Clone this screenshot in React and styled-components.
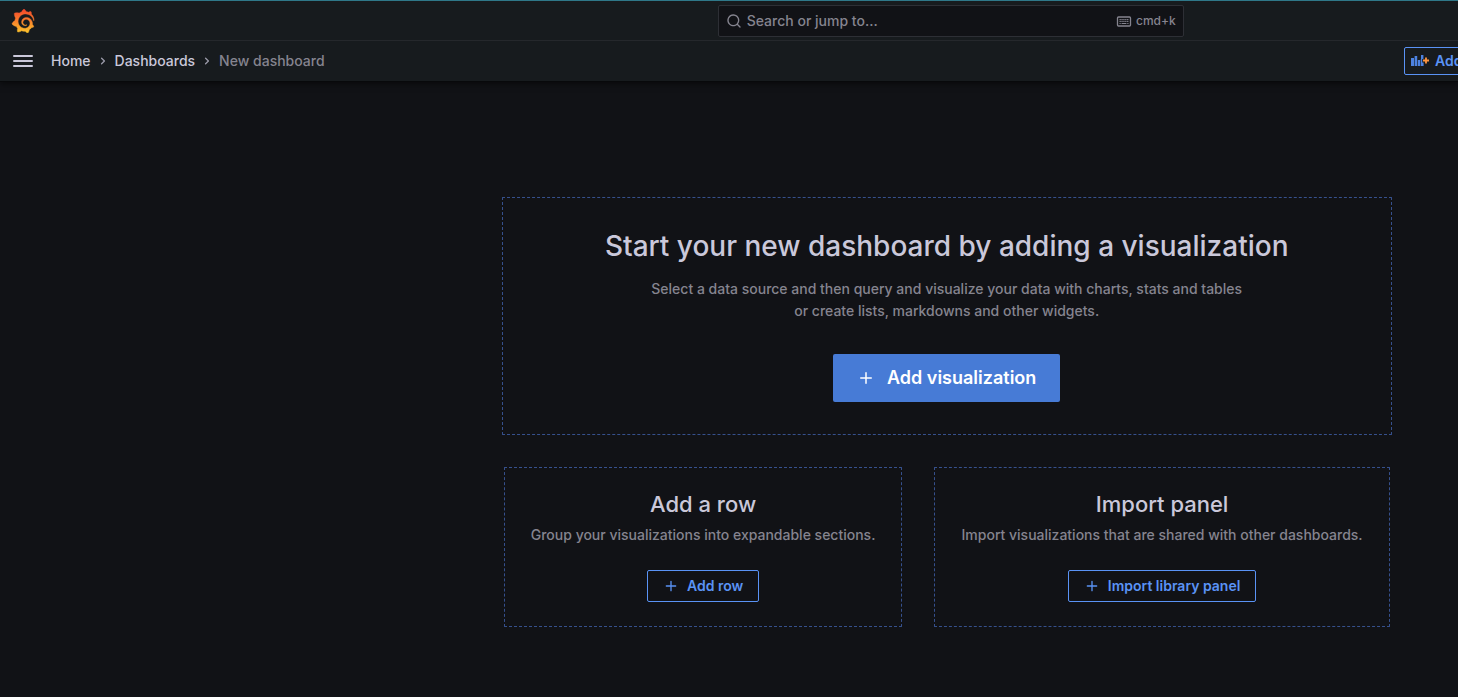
import React from "react";
import styled, { createGlobalStyle, css } from "styled-components";
import { SiGrafana } from "react-icons/si";

const GlobalStyle = createGlobalStyle`
  *, *::before, *::after { box-sizing: border-box; }
  body {
    margin: 0;
    background: #111216;
    color: #cac8da;
    font-family: Inter, "Liberation Sans", sans-serif;
    font-size: 14px;
    line-height: 22px;
    -webkit-font-smoothing: antialiased;
  }
  button, input { font: inherit; color: inherit; }
  h1, h2, p, ol { margin: 0; padding: 0; }
`;

const Page = styled.div`
  min-height: 100vh;
  overflow: hidden;
  display: flex;
  flex-direction: column;
`;

const Header = styled.header`
  background: #171b1e;
  border-top: 1px solid #2f7889;
  border-bottom: 1px solid #08090b;
  box-shadow: 0 2px 6px rgba(0, 0, 0, 0.5);
`;

const wideCanvas = css`
  width: calc(130% - 2px);
`;

const TopBar = styled.div`
  ${wideCanvas}
  display: flex;
  align-items: center;
  height: 40px;
  padding-left: 8px;
  border-bottom: 1px solid #25282c;
`;

const TopBarSide = styled.div`
  flex: 1;
  display: flex;
  padding-left: 3px;
`;

const HomeLink = styled.a`
  display: flex;
  color: #f9622f;
`;

const SearchBox = styled.label`
  display: flex;
  align-items: center;
  gap: 5px;
  flex: 0 1 466px;
  height: 32px;
  padding: 0 7px;
  background: #111216;
  border: 1px solid #2d2f35;
  border-radius: 2px;
  color: #85848f;
`;

const SearchInput = styled.input`
  flex: 1;
  min-width: 0;
  padding: 0;
  border: 0;
  outline: 0;
  background: none;
  font-weight: 500;
  &::placeholder { color: #85848f; opacity: 1; }
`;

const Shortcut = styled.span`
  display: flex;
  align-items: center;
  gap: 4px;
  font-size: 12px;
  font-weight: 500;
  line-height: 20px;
`;

const ToolBar = styled.div`
  display: flex;
  align-items: center;
  height: 40px;
  padding-left: 11px;
`;

const IconButton = styled.button`
  display: flex;
  padding: 0;
  border: 0;
  background: none;
`;

const Breadcrumbs = styled.nav`
  flex: 1;
  padding-left: 16px;
`;

const CrumbList = styled.ol`
  display: flex;
  align-items: center;
  list-style: none;
`;

const Crumb = styled.li`
  display: flex;
  align-items: center;
  font-weight: 500;
  color: ${(p) => (p.$current ? "#85848f" : "#cac8da")};
  a { color: inherit; text-decoration: none; }
  svg { margin: 0 4px; color: #9a9aa8; }
`;

const Actions = styled.div`
  flex: 0 0 54px;
  min-width: 0;
  display: flex;
`;

const buttonSizes = {
  sm: css`height: 28px; padding: 0 6px; gap: 4px;`,
  md: css`height: 32px; padding: 0 15px; gap: 8px;`,
  lg: css`height: 48px; padding: 0 24px; gap: 12px; font-size: 18px;`,
};

const Button = styled.button`
  display: inline-flex;
  align-items: center;
  flex: none;
  border-radius: 2px;
  font-weight: 600;
  white-space: nowrap;
  ${(p) =>
    p.$primary
      ? css`background: #477bd6; color: #fff; border: 0;`
      : css`background: transparent; color: #5a93f5; border: 1px solid #5a93f5;`}
  ${(p) => buttonSizes[p.$size]}
`;

const Main = styled.main`
  ${wideCanvas}
  display: flex;
  flex-direction: column;
  align-items: center;
  gap: 32px;
  padding: 115px 0 64px;
`;

const Card = styled.section`
  display: flex;
  flex-direction: column;
  align-items: center;
  text-align: center;
  border: 1px dashed #36508c;
  border-radius: 1px;
  ${(p) =>
    p.$hero
      ? css`width: 100%; max-width: 890px; padding: 32px;`
      : css`flex: 1 1 auto; padding: 24px 16px;`}
`;

const CardRow = styled.div`
  display: flex;
  gap: 32px;
  width: 100%;
  max-width: 886px;
`;

const HeroTitle = styled.h1`
  font-size: 28px;
  line-height: 32px;
  font-weight: 500;
`;

const CardTitle = styled.h2`
  font-size: 22px;
  line-height: 24px;
  font-weight: 500;
`;

const Text = styled.p`
  margin: ${(p) => (p.$hero ? "16px 0 32px" : "8px 0 24px")};
  color: #85848f;
  font-weight: 500;
`;

const paths = {
  search:
    "M21.71,20.29,18,16.61A9,9,0,1,0,16.61,18l3.68,3.68a1,1,0,0,0,1.42,0A1,1,0,0,0,21.71,20.29ZM11,18a7,7,0,1,1,7-7A7,7,0,0,1,11,18Z",
  angle:
    "M14.83,11.29,10.59,7.05a1,1,0,0,0-1.42,0,1,1,0,0,0,0,1.41L12.71,12,9.17,15.54a1,1,0,0,0,0,1.41,1,1,0,0,0,.71.29,1,1,0,0,0,.71-.29l4.24-4.24A1,1,0,0,0,14.83,11.29Z",
  plus:
    "M19,11H13V5a1,1,0,0,0-2,0v6H5a1,1,0,0,0,0,2h6v6a1,1,0,0,0,2,0V13h6a1,1,0,0,0,0-2Z",
  bars:
    "M3,8H21a1,1,0,0,0,0-2H3A1,1,0,0,0,3,8Zm18,8H3a1,1,0,0,0,0,2H21a1,1,0,0,0,0-2Zm0-5H3a1,1,0,0,0,0,2H21a1,1,0,0,0,0-2Z",
};

const Icon = ({ name, size = 16 }) => (
  <svg width={size} height={size} viewBox="0 0 24 24" fill="currentColor" aria-hidden="true">
    <path d={paths[name]} />
  </svg>
);

const KeyboardIcon = () => (
  <svg width="16" height="16" viewBox="0 0 16 16" fill="none" stroke="currentColor" aria-hidden="true">
    <rect x="1.5" y="4" width="13" height="9" rx="1" strokeWidth="1.3" />
    <path d="M3.5 6.6h9M3.5 8.5h9" strokeWidth="1.1" strokeDasharray="1.3 0.6" />
    <path d="M3.5 10.5h1.2M5.6 10.5h4.8M11.3 10.5h1.2" strokeWidth="1.1" />
  </svg>
);

const PanelAddIcon = () => (
  <svg width="20" height="16" viewBox="0 0 20 16" aria-hidden="true">
    <g fill="#4d82e0">
      <rect x="0" y="5" width="3" height="8" />
      <rect x="3.6" y="3" width="2.6" height="10" />
      <rect x="6.8" y="7" width="2.4" height="6" />
      <rect x="10" y="2" width="2.4" height="4" />
      <rect x="9.8" y="6" width="1.4" height="7" />
      <rect x="11" y="9.5" width="1.6" height="3.5" />
    </g>
    <path d="M15 4.5v6M12 7.5h6" stroke="#ff9640" strokeWidth="1.8" />
  </svg>
);

const Logo = () => (
  <>
    <SiGrafana size={24} fill="url(#flame)" stroke="url(#flame)" strokeWidth="0.4" aria-hidden="true" />
    <svg width="0" height="0" aria-hidden="true">
      <defs>
        <linearGradient id="flame" x1="0" y1="1" x2="0" y2="0">
          <stop offset="0" stopColor="#fcc62b" />
          <stop offset="0.5" stopColor="#f9802c" />
          <stop offset="1" stopColor="#f2452b" />
        </linearGradient>
      </defs>
    </svg>
  </>
);

export default function App() {
  return (
    <Page>
      <GlobalStyle />
      <Header>
        <TopBar>
          <TopBarSide>
            <HomeLink href="#" aria-label="Grafana">
              <Logo />
            </HomeLink>
          </TopBarSide>
          <SearchBox>
            <Icon name="search" />
            <SearchInput type="text" aria-label="Search" placeholder="Search or jump to..." />
            <Shortcut>
              <KeyboardIcon />
              cmd+k
            </Shortcut>
          </SearchBox>
          <TopBarSide />
        </TopBar>
        <ToolBar>
          <IconButton type="button" aria-label="Menu">
            <Icon name="bars" size={24} />
          </IconButton>
          <Breadcrumbs aria-label="Breadcrumbs">
            <CrumbList>
              <Crumb>
                <a href="#">Home</a>
                <Icon name="angle" />
              </Crumb>
              <Crumb>
                <a href="#">Dashboards</a>
                <Icon name="angle" />
              </Crumb>
              <Crumb $current>New dashboard</Crumb>
            </CrumbList>
          </Breadcrumbs>
          <Actions>
            <Button type="button" $size="sm">
              <PanelAddIcon />
              Add
            </Button>
          </Actions>
        </ToolBar>
      </Header>
      <Main>
        <Card $hero>
          <HeroTitle>Start your new dashboard by adding a visualization</HeroTitle>
          <Text $hero>
            Select a data source and then query and visualize your data with charts, stats and tables
            <br />
            or create lists, markdowns and other widgets.
          </Text>
          <Button type="button" $primary $size="lg">
            <Icon name="plus" size={18} />
            Add visualization
          </Button>
        </Card>
        <CardRow>
          <Card>
            <CardTitle>Add a row</CardTitle>
            <Text>Group your visualizations into expandable sections.</Text>
            <Button type="button" $size="md">
              <Icon name="plus" />
              Add row
            </Button>
          </Card>
          <Card>
            <CardTitle>Import panel</CardTitle>
            <Text>Import visualizations that are shared with other dashboards.</Text>
            <Button type="button" $size="md">
              <Icon name="plus" />
              Import library panel
            </Button>
          </Card>
        </CardRow>
      </Main>
    </Page>
  );
}
